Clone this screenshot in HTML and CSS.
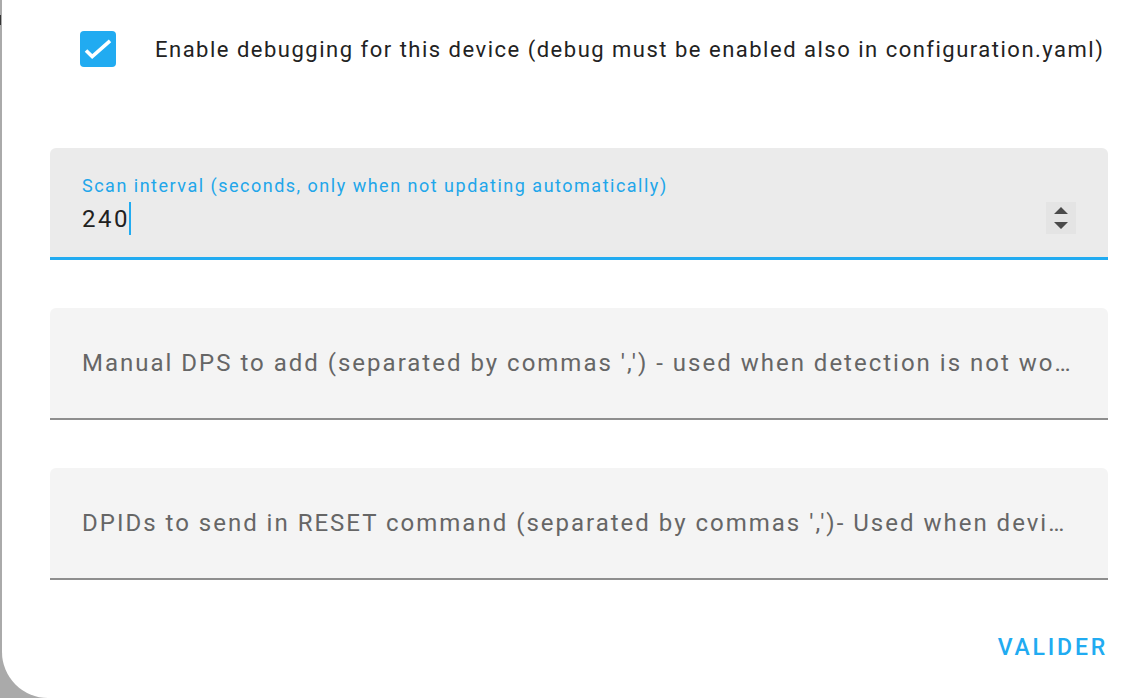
FILE: index.html
```html
<!DOCTYPE html>
<html lang="fr">
<head>
<meta charset="utf-8">
<title>Options</title>
<link rel="stylesheet" href="styles.css">
</head>
<body>
<div class="backdrop-mark"></div>
<div class="dialog">
  <div class="check-row">
    <span class="checkbox">
      <svg viewBox="0 0 36 36" width="36" height="36"><path d="M6 19.5 L12.2 25.6 L30 9.8" fill="none" stroke="#fff" stroke-width="3.6" stroke-linecap="butt" stroke-linejoin="miter"/></svg>
    </span>
    <span class="check-label">Enable debugging for this device (debug must be enabled also in configuration.yaml)</span>
  </div>

  <div class="fields">
    <div class="field focused">
      <div class="field-main">
        <div class="field-label">Scan interval (seconds, only when not updating automatically)</div>
        <div class="field-value">240<span class="caret"></span></div>
      </div>
      <div class="spinner">
        <svg viewBox="0 0 14 22" width="14" height="22"><path d="M7 0 L14 7 L0 7 Z M0 15 L14 15 L7 22 Z" fill="#4a4a4a"/></svg>
      </div>
    </div>
    <div class="field">
      <div class="placeholder">Manual DPS to add (separated by commas ',') - used when detection is not working (optional)</div>
    </div>
    <div class="field">
      <div class="placeholder">DPIDs to send in RESET command (separated by commas ',')- Used when device does not respond to status requests after turning on (optional)</div>
    </div>
  </div>

  <div class="actions">
    <button class="btn">Valider</button>
  </div>
</div>
</body>
</html>
```

FILE: styles.css
```css
html, body {
  margin: 0;
  padding: 0;
  height: 100%;
  overflow: hidden;
}
body {
  background: #aaaaaa;
  font-family: Roboto, "Liberation Sans", sans-serif;
  position: relative;
}
.backdrop-mark {
  position: absolute;
  left: 0;
  top: 15px;
  width: 1px;
  height: 10px;
  background: #333;
}
.dialog {
  margin-left: 2px;
  height: 698px;
  background: #ffffff;
  border-bottom-left-radius: 46px;
  padding: 31px 36px 0 48px;
  box-sizing: border-box;
  display: flex;
  flex-direction: column;
}
.check-row {
  display: flex;
  align-items: center;
  height: 36px;
  padding-left: 30px;
}
.checkbox {
  width: 36px;
  height: 36px;
  border-radius: 4px;
  background: #21abf1;
  display: flex;
  flex: none;
}
.check-label {
  margin-left: 39px;
  font-size: 22px;
  letter-spacing: 1.5px;
  color: #222222;
  white-space: nowrap;
}
.fields {
  margin-top: 81px;
  display: flex;
  flex-direction: column;
  gap: 48px;
}
.field {
  height: 112px;
  box-sizing: border-box;
  background: #f4f4f4;
  border-radius: 6px 6px 0 0;
  border-bottom: 2px solid #8e8e8e;
  display: flex;
  align-items: center;
  padding: 0 30px 0 32px;
}
.field.focused {
  background: #ebebeb;
  border-bottom: 3px solid #21abf1;
  align-items: flex-start;
  padding-right: 32px;
}
.field-main {
  flex: 1;
  min-width: 0;
  padding-top: 27px;
}
.field-label {
  font-size: 18px;
  line-height: 22px;
  letter-spacing: 1.5px;
  color: #21a6ea;
  white-space: nowrap;
}
.field-value {
  font-size: 24px;
  line-height: 30px;
  letter-spacing: 2.5px;
  margin-top: 5px;
  color: #212121;
  display: flex;
  align-items: center;
}
.caret {
  display: inline-block;
  width: 2px;
  height: 33px;
  background: #21abf1;
  margin-left: -1px;
}
.spinner {
  margin-top: 54px;
  width: 30px;
  height: 32px;
  background: #e4e4e4;
  display: flex;
  align-items: center;
  justify-content: center;
  flex: none;
}
.placeholder {
  font-size: 24px;
  letter-spacing: 2px;
  color: #666666;
  white-space: nowrap;
  overflow: hidden;
  text-overflow: ellipsis;
  min-width: 0;
}
.actions {
  display: flex;
  justify-content: flex-end;
  margin-top: 40px;
}
.btn {
  background: none;
  border: none;
  padding: 0;
  height: 54px;
  font-family: Roboto, "Liberation Sans", sans-serif;
  font-size: 23px;
  font-weight: 500;
  letter-spacing: 2.8px;
  text-transform: uppercase;
  color: #21abf1;
}
```
